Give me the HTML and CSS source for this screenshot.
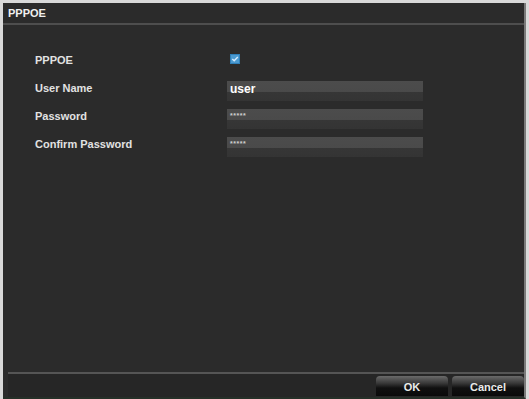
FILE: index.html
```html
<!DOCTYPE html>
<html lang="en">
<head>
  <meta charset="UTF-8">
  <title>PPPOE</title>
  <link rel="stylesheet" href="styles.css">
</head>
<body>

<div class="window">
  <div class="title-bar">PPPOE</div>

  <div class="content">
    <div class="form-row">
      <span class="label">PPPOE</span>
      <span class="check">
        <svg width="10" height="10" viewBox="0 0 10 10">
          <rect x="0" y="0" width="10" height="10" fill="#2f7fb8"/>
          <rect x="1" y="1" width="8" height="8" fill="#4b9ad0"/>
          <path d="M2.3 5 L4.2 6.8 L7.8 3" stroke="#d6ecff" stroke-width="1.4" fill="none"/>
        </svg>
      </span>
    </div>
    <div class="form-row">
      <span class="label">User Name</span>
      <div class="field"><span class="value">user</span></div>
    </div>
    <div class="form-row">
      <span class="label">Password</span>
      <div class="field"><span class="mask">*****</span></div>
    </div>
    <div class="form-row">
      <span class="label">Confirm Password</span>
      <div class="field"><span class="mask">*****</span></div>
    </div>
  </div>

  <div class="footer">
    <button class="btn">OK</button>
    <button class="btn">Cancel</button>
  </div>
</div>

</body>
</html>
```

FILE: styles.css
```css
body {
  margin: 0;
  width: 529px;
  height: 399px;
  background: #d9d9d9;
  font-family: 'Liberation Sans', Arial, sans-serif;
  overflow: hidden;
}

.window {
  margin: 3px 0 0 3px;
  width: 521px;
  height: 394px;
  background: #2b2b2b;
  border-right: 2px solid #7a7a7a;
  border-bottom: 2px solid #263028;
  display: flex;
  flex-direction: column;
}

.title-bar {
  height: 18px;
  padding: 2px 0 0 5px;
  color: #f0f0f0;
  font-size: 11px;
  font-weight: bold;
  line-height: 16px;
  border-bottom: 2px solid #4e4e4e;
}

.content {
  flex: 1;
  padding: 21px 0 0 32px;
}

.form-row {
  display: grid;
  grid-template-columns: 192px 196px;
  align-items: center;
  height: 28px;
}

.label {
  color: #e2e2e2;
  font-size: 11px;
  font-weight: bold;
}

.check {
  display: flex;
  padding-left: 3px;
  margin-top: -2px;
}

.field {
  height: 20px;
  margin-top: 5px;
  background: linear-gradient(#4c4c4c 0, #4a4a4a 55%, #363636 56%, #343434 100%);
  display: flex;
  align-items: center;
  padding-left: 3px;
  box-sizing: border-box;
}

.value {
  color: #ffffff;
  font-size: 12px;
  font-weight: bold;
  margin-top: -3px;
}

.mask {
  color: #cfcfcf;
  font-size: 7px;
  font-weight: bold;
  letter-spacing: 0.5px;
  margin-top: -6px;
}

.footer {
  margin-left: 5px;
  border-top: 2px solid #555;
  height: 21px;
  padding-top: 2px;
  display: flex;
  justify-content: flex-end;
  gap: 4px;
  background: #262626;
}

.btn {
  width: 72px;
  height: 20px;
  border: none;
  border-radius: 4px 4px 0 0;
  background: linear-gradient(#6a6a6a 0, #3a3a3a 35%, #101010 60%, #0a0a0a 100%);
  color: #eaeaea;
  font-family: 'Liberation Sans', Arial, sans-serif;
  font-size: 11px;
  font-weight: bold;
  padding: 2px 0 0;
}
```
